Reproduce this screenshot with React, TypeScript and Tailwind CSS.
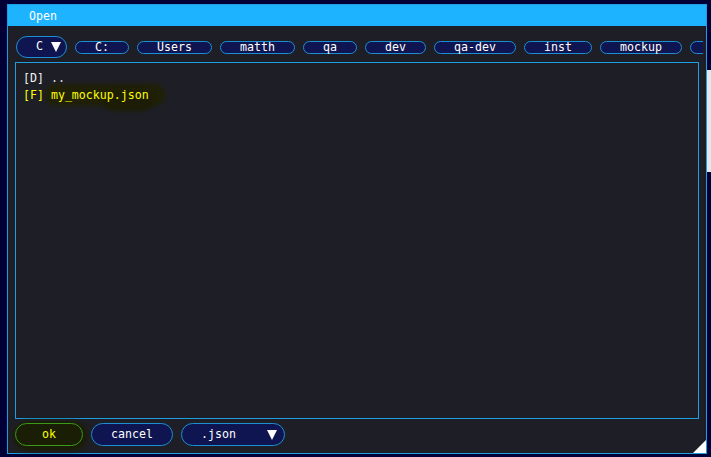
const crumbs: { label: string; w: string }[] = [
  { label: "C:", w: "w-[54px]" },
  { label: "Users", w: "w-[75px]" },
  { label: "matth", w: "w-[75px]" },
  { label: "qa", w: "w-[54px]" },
  { label: "dev", w: "w-[61px]" },
  { label: "qa-dev", w: "w-[82px]" },
  { label: "inst", w: "w-[68px]" },
  { label: "mockup", w: "w-[82px]" },
  { label: "", w: "w-[40px]" },
];

function Tri({ className }: { className?: string }) {
  return (
    <svg width="10" height="10" viewBox="0 0 10 10" className={className}>
      <polygon points="0,0 10,0 5,10" fill="#ffffff" />
    </svg>
  );
}

function Pill({ label, w }: { label: string; w: string }) {
  return (
    <div
      className={`${w} h-[13px] shrink-0 rounded-full border border-[#1c8fd4] bg-[#0f1550] flex items-center justify-center text-white leading-none pt-[1px]`}
    >
      {label}
    </div>
  );
}

export default function App() {
  return (
    <div
      className="w-[711px] h-[457px] bg-[#000036] flex items-start overflow-hidden text-[11.6px]"
      style={{ fontFamily: '"DejaVu Sans Mono", "Liberation Mono", monospace' }}
    >
      <div className="ml-[7px] mt-[4px] w-[700px] h-[450px] border border-[#1c9ee0] bg-[#1e1f26] flex flex-col relative">
        <div className="h-[21px] bg-[#1eb3ff] text-white flex items-center pl-[21px] pt-[2px]">
          Open
        </div>

        <div className="pl-[8px] pt-[10px] w-[695px] overflow-hidden flex items-center gap-[8px]">
          <div className="w-[51px] h-[22px] shrink-0 rounded-full border border-[#1c8fd4] bg-[#0f1550] flex items-center pl-[19px] gap-[8px] text-white">
            <span>C</span>
            <Tri />
          </div>
          {crumbs.map((c, i) => (
            <Pill key={i} label={c.label} w={c.w} />
          ))}
        </div>

        <div className="ml-[7px] mt-[4px] w-[684px] h-[357px] border border-[#1c9ee0] px-[7px] pt-[9px] flex flex-col gap-[4px] leading-[13px]">
          <div className="text-[#f2f2f2]">[D] ..</div>
          <div className="text-[#ffff00] relative">
            <div className="absolute left-[22px] top-[-5px] w-[120px] h-[22px] rounded-full bg-[#202006] blur-[2px]" />
            <div className="absolute left-[80px] top-[2px] w-[50px] h-[20px] rounded-full bg-[#1d1d06] blur-[2px]" />
            <span className="relative">[F] my_mockup.json</span>
          </div>
        </div>

        <div className="ml-[7px] mt-[4px] flex items-center gap-[8px]">
          <div className="relative w-[68px] h-[23px]">
            <div className="absolute -left-[2px] -top-[2px] -right-[5px] -bottom-[5px] rounded-full bg-[#1b1c05] blur-[2px]" />
            <div className="relative w-[68px] h-[23px] rounded-full border border-[#3a9a1a] bg-[#1a1e05] flex items-center justify-center text-[#ffff00]">
              ok
            </div>
          </div>
          <div className="w-[82px] h-[23px] rounded-full border border-[#1c8fd4] bg-[#0f1550] flex items-center justify-center text-white">
            cancel
          </div>
          <div className="w-[104px] h-[23px] rounded-full border border-[#1c8fd4] bg-[#0f1550] flex items-center text-white pl-[19px] pr-[7px]">
            <span className="flex-1">.json</span>
            <Tri />
          </div>
        </div>

        <svg
          width="13"
          height="13"
          viewBox="0 0 13 13"
          className="absolute right-0 bottom-0"
        >
          <polygon points="13,0 13,13 0,13" fill="#ffffff" />
        </svg>
      </div>
      <div className="mt-[70px] w-[4px] h-[102px] bg-[#e6e6ea]" />
    </div>
  );
}
